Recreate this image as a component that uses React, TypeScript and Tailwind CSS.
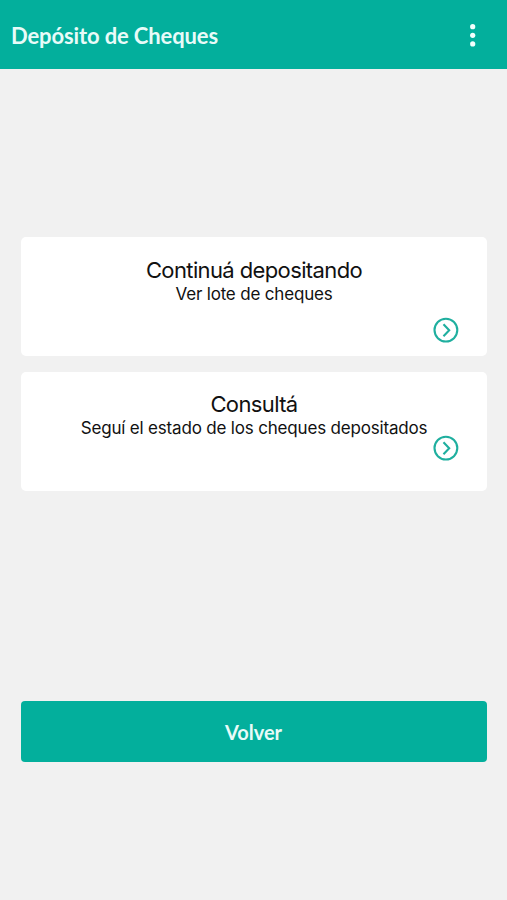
type CardProps = {
  title: string;
  subtitle: string;
  className: string;
  iconClass: string;
};

function ArrowIcon() {
  return (
    <svg width="26" height="26" viewBox="0 0 26 26" fill="none" stroke="#1faf9f" strokeWidth="2.1">
      <circle cx="12.9" cy="13.1" r="11.4" />
      <path d="M11.2 8 L16.2 13.2 L11.2 18.4" strokeLinecap="square" />
    </svg>
  );
}

function OptionCard({ title, subtitle, className, iconClass }: CardProps) {
  return (
    <button className={`flex h-[119px] w-full flex-col rounded-[5px] bg-white text-center text-[#111] ${className}`}>
      <span className="w-full text-[22px] leading-7 tracking-[-0.62px]">{title}</span>
      <span className="w-full text-[17px] leading-5 tracking-[-0.18px]">{subtitle}</span>
      <span className={`mr-7 self-end ${iconClass}`}>
        <ArrowIcon />
      </span>
    </button>
  );
}

export default function App() {
  return (
    <div className="flex h-[900px] w-full flex-col bg-[#f1f1f1] font-['Inter',sans-serif]">
      <header className="flex h-[69px] items-center justify-between bg-[#03af9c] pt-0.5 pr-[31px] pl-[11px]">
        <h1 className="font-['Lato',sans-serif] text-[22px] font-bold tracking-[-0.13px] text-[#e8fbf8]">
          Depósito de Cheques
        </h1>
        <svg width="6" height="24" viewBox="0 0 6 24" fill="#f4fffd">
          <circle cx="2.7" cy="2.7" r="2.6" />
          <circle cx="2.7" cy="11.3" r="2.6" />
          <circle cx="2.7" cy="19.9" r="2.6" />
        </svg>
      </header>
      <main className="flex flex-col pt-[168px] pr-5 pl-[21px]">
        <div className="flex flex-col gap-4">
          <OptionCard
            title="Continuá depositando"
            subtitle="Ver lote de cheques"
            className="pt-[19px]"
            iconClass="mt-[13px]"
          />
          <OptionCard
            title="Consultá"
            subtitle="Seguí el estado de los cheques depositados"
            className="pt-[18px]"
            iconClass="-mt-[3px]"
          />
        </div>
        <button className="mt-[210px] h-[61px] rounded-[4px] bg-[#03af9c] pr-px font-['Lato',sans-serif] text-[20px] font-bold text-[#e8fbf8]">
          Volver
        </button>
      </main>
    </div>
  );
}
